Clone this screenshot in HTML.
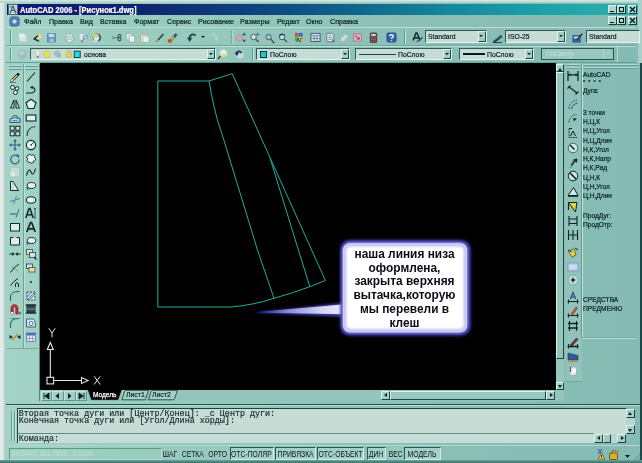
<!DOCTYPE html>
<html><head><meta charset="utf-8">
<style>
*{margin:0;padding:0;box-sizing:border-box}
html,body{width:642px;height:463px;overflow:hidden;background:#8dc0b7;font-family:"Liberation Sans",sans-serif;}
#root{position:relative;width:642px;height:463px;overflow:hidden;background:linear-gradient(90deg,#a4d3c5 0%,#9ccebf 15%,#96cabb 30%,#8ec2b7 55%,#88bdb5 80%,#86bbb4 100%)}
#blur{position:absolute;left:0;top:0;width:642px;height:463px;filter:blur(0.4px)}
.abs{position:absolute}
.t{position:absolute;white-space:nowrap;color:#062224;font-size:8px;line-height:10px;transform:scaleX(.89);transform-origin:0 0;-webkit-text-stroke:.22px currentColor}
.dd{position:absolute;background:#c8dcd6;border:1px solid #2c5a58;border-right-color:#e4f4ee;border-bottom-color:#e4f4ee;height:12.6px}
.dt{transform:scaleX(.85)}
.ddb{position:absolute;right:0;top:0;width:8px;height:10.6px;background:#a2cec4;border-left:1px solid #e4f4ee;border-top:1px solid #e4f4ee;border-right:1px solid #1c4644;border-bottom:1px solid #1c4644}
.ddb:after{content:"";position:absolute;left:0.8px;top:3px;border:2.2px solid transparent;border-top:2.8px solid #0a2020}
.sep{position:absolute;width:1px;background:#5e9a94;box-shadow:1px 0 0 #c4e4dc}
.wb{position:absolute;width:9px;height:9px;background:#acd8cc;border:1px solid #d8f0ea;border-right-color:#123c3c;border-bottom-color:#123c3c}
.sb{position:absolute;background:#a4d0c6;border:1px solid #dcf2ec;border-right-color:#1c4644;border-bottom-color:#1c4644}
.st{position:absolute;top:447px;height:12.5px;font-size:8.5px;line-height:12px;color:#041c1e;white-space:nowrap;text-align:center;overflow:visible;background:#98c8be}
.st span{display:inline-block;transform:scaleX(.8);transform-origin:50% 50%;white-space:nowrap;margin:0 -6px}
.st.on{border:1px solid #2a5654;border-right-color:#d4eee6;border-bottom-color:#d4eee6;background:#a4d0c6}
.mono{font-family:"Liberation Mono",monospace;font-size:8.4px;line-height:9px;color:#142c30;position:absolute;white-space:nowrap;-webkit-text-stroke:.18px #142c30}
svg{position:absolute;overflow:visible}
</style></head><body>
<div id="root"><div id="blur">

<div class="abs" style="left:0;top:0;width:5.5px;height:463px;background:linear-gradient(90deg,#e4ecea 0,#dfe8e6 50%,#98c6be 100%)"></div>
<div class="abs" style="left:0;top:0;width:642px;height:3px;background:linear-gradient(180deg,#d8ece6,#a4ccc4)"></div>
<div class="abs" style="left:638px;top:0;width:4px;height:63px;background:#a8d0c8"></div>
<div class="abs" style="left:640px;top:63px;width:2px;height:400px;background:#1c4848"></div>
<div class="abs" style="left:0;top:460px;width:642px;height:3px;background:linear-gradient(180deg,#6aa49c,#3c706c)"></div>
<div class="abs" style="left:7px;top:3.5px;width:631px;height:11.5px;background:linear-gradient(90deg,#101870 0%,#0e2470 20%,#0e4480 40%,#10648c 55%,#14889c 70%,#1ca2a8 85%,#30b0b0 100%)"></div>
<svg style="left:8px;top:4px" width="10" height="11"><rect x="0.5" y="0.5" width="9" height="10" fill="#c0d8d8" stroke="#48687c" stroke-width=".8"/><path d="M2 9.5L5 2L8 9.5M3 6.5H7" stroke="#2c6478" stroke-width="1.1" fill="none"/><path d="M1.5 3H4M6.5 8H8.5" stroke="#a04838" stroke-width=".9"/></svg>
<div class="t" style="left:20px;top:4.5px;color:#fff;font-weight:bold;font-size:8.4px;transform:scaleX(.9)">AutoCAD 2006 - [Рисунок1.dwg]</div>
<div class="wb" style="left:608px;top:5px"><i class="abs" style="left:1px;top:5px;width:3.5px;height:1.4px;background:#031818"></i></div>
<div class="wb" style="left:617px;top:5px"><i class="abs" style="left:1px;top:0.5px;width:5px;height:5.5px;border:1px solid #031818;border-top-width:1.6px"></i></div>
<div class="wb" style="left:628px;top:5px"><svg style="left:1px;top:1px" width="5" height="5"><path d="M0 0L5 5M5 0L0 5" stroke="#031818" stroke-width="1.3"/></svg></div>
<div class="wb" style="left:608px;top:16px"><i class="abs" style="left:1px;top:5px;width:3.5px;height:1.4px;background:#031818"></i></div>
<div class="wb" style="left:617px;top:16px"><i class="abs" style="left:1px;top:0.5px;width:5px;height:5.5px;border:1px solid #031818;border-top-width:1.6px"></i></div>
<div class="wb" style="left:628px;top:16px"><svg style="left:1px;top:1px" width="5" height="5"><path d="M0 0L5 5M5 0L0 5" stroke="#031818" stroke-width="1.3"/></svg></div>
<svg style="left:9px;top:16px" width="11" height="11"><rect x="0.8" y="0.8" width="9.4" height="9.4" rx="2.5" fill="#4c80b0" stroke="#3c6890" stroke-width=".8"/><path d="M3 5.5H8M5.5 3V8M3.8 3.8L7.2 7.2M7.2 3.8L3.8 7.2" stroke="#d0e4f0" stroke-width=".9"/></svg>
<div class="t" style="left:24px;top:16.5px">Файл</div>
<div class="t" style="left:49px;top:16.5px">Правка</div>
<div class="t" style="left:80px;top:16.5px">Вид</div>
<div class="t" style="left:100px;top:16.5px">Вставка</div>
<div class="t" style="left:134px;top:16.5px">Формат</div>
<div class="t" style="left:167px;top:16.5px">Сервис</div>
<div class="t" style="left:198px;top:16.5px">Рисование</div>
<div class="t" style="left:240px;top:16.5px">Размеры</div>
<div class="t" style="left:277px;top:16.5px">Редакт</div>
<div class="t" style="left:306px;top:16.5px">Окно</div>
<div class="t" style="left:330px;top:16.5px">Справка</div>
<div class="abs" style="left:6px;top:27px;width:630px;height:1px;background:#bcded6"></div>
<div class="abs" style="left:6px;top:45px;width:630px;height:1px;background:#6ea8a0"></div>
<div class="abs" style="left:6px;top:46px;width:630px;height:1px;background:#bcded6"></div>
<div class="abs" style="left:6px;top:62px;width:630px;height:1px;background:#64a098"></div>
<div class="sep" style="left:10px;top:30px;height:14px"></div>
<div class="sep" style="left:10px;top:48px;height:13px"></div>
<svg style="left:16.5px;top:32.0px;opacity:0.88" width="11" height="11" viewBox="0 0 12 12"><path d="M2 1.5H8L10.5 4V10.5H2Z" fill="#dcece8" stroke="#a8c8c2" stroke-width=".7"/><path d="M2.5 2H7.5L6 6H2.5Z" fill="#f0f8f6"/></svg>
<svg style="left:32.0px;top:31.5px;opacity:0.88" width="11" height="11" viewBox="0 0 12 12"><path d="M3 3L10 1.5L11 6.5L5 9Z" fill="#e8e0a0" stroke="#b8b070" stroke-width=".5"/><path d="M6.5 4L2.5 7.5L7.5 10" stroke="#101c48" stroke-width="1.8" fill="none"/></svg>
<svg style="left:45.5px;top:31.5px;opacity:0.88" width="11" height="11" viewBox="0 0 12 12"><rect x="1.5" y="1.5" width="9" height="9.5" fill="#6890c0" stroke="#4870a8" stroke-width=".7"/><rect x="3" y="2" width="6" height="3.5" fill="#c8dcec"/><rect x="4" y="7.5" width="4.5" height="3.5" fill="#a8c0d8"/></svg>
<svg style="left:63.5px;top:32.0px;opacity:0.88" width="11" height="11" viewBox="0 0 12 12"><rect x="1.5" y="5" width="9" height="4.5" rx="1.5" fill="#d0dce0" stroke="#7890a0" stroke-width=".6"/><circle cx="4.5" cy="3.5" r="2" fill="#e8eef0" stroke="#8098a8" stroke-width=".6"/><circle cx="7.5" cy="4" r="1.8" fill="#f0f4f4" stroke="#8098a8" stroke-width=".5"/><rect x="3.5" y="8" width="5" height="2.8" fill="#f4f8f8" stroke="#90a8b0" stroke-width=".5"/></svg>
<svg style="left:77.5px;top:31.5px;opacity:0.88" width="11" height="11" viewBox="0 0 12 12"><path d="M1.5 1.5H8L10 3.5V9.5H1.5Z" fill="#e0eceC" stroke="#a0bcc0" stroke-width=".6"/><circle cx="8" cy="5.5" r="2.3" fill="#b8d0f0" stroke="#5878b0" stroke-width=".8"/><path d="M6.3 7.3L3.5 11" stroke="#a84848" stroke-width="1.1"/></svg>
<svg style="left:91.0px;top:31.5px;opacity:0.88" width="11" height="11" viewBox="0 0 12 12"><circle cx="6.5" cy="6" r="4.3" fill="#e8f0f0" stroke="#304868" stroke-width=".8"/><ellipse cx="5" cy="4" rx="3" ry="2.2" fill="#e8d060"/><path d="M8 3C10.5 4.5 10.5 8 8 9.5" stroke="#203c68" stroke-width="1.5" fill="none"/><path d="M2.5 9H7V11H2.5Z" fill="#d8e0e4"/></svg>
<svg style="left:110.5px;top:31.5px;opacity:0.88" width="11" height="11" viewBox="0 0 12 12"><path d="M1 5L8 7M1 7.5L8 5.5" stroke="#507880" stroke-width=".9"/><circle cx="9.3" cy="4.3" r="1.6" fill="none" stroke="#1c3c48" stroke-width="1.1"/><circle cx="9.3" cy="8" r="1.6" fill="none" stroke="#1c3c48" stroke-width="1.1"/></svg>
<svg style="left:124.5px;top:31.5px;opacity:0.88" width="11" height="11" viewBox="0 0 12 12"><path d="M1.5 1.5H6L7.5 3V8.5H1.5Z" fill="#eef4f4" stroke="#809ca0" stroke-width=".7"/><path d="M4.5 4H9L10.5 5.5V11H4.5Z" fill="#f6fafa" stroke="#809ca0" stroke-width=".7"/></svg>
<svg style="left:138.5px;top:31.5px;opacity:0.88" width="11" height="11" viewBox="0 0 12 12"><rect x="1.5" y="2.5" width="8" height="8.5" rx="1" fill="#e4dcc8" stroke="#c09060" stroke-width=".7"/><rect x="4" y="1.2" width="3" height="2.2" fill="#b0b8c0"/><path d="M4.5 5H10.5V11H4.5Z" fill="#f4f8f8" stroke="#a0b8c0" stroke-width=".5"/></svg>
<svg style="left:153.5px;top:31.5px;opacity:0.88" width="11" height="11" viewBox="0 0 12 12"><path d="M2 10.5L4 8.5L9.5 2L10.5 3L5 9Z" fill="#283848" stroke="#182830" stroke-width=".6"/><path d="M2 10.5L3.5 8L5 9.5Z" fill="#c8a060"/></svg>
<svg style="left:167.0px;top:31.5px;opacity:0.88" width="11" height="11" viewBox="0 0 12 12"><path d="M2 10L7 4L9 6L4 11Z" fill="#d8a838" stroke="#705010" stroke-width=".6"/><path d="M7 4L9.5 1.5L11 3L9 6Z" fill="#304890" stroke="#182850" stroke-width=".6"/><rect x="1" y="8" width="4" height="3.5" fill="#c83828"/></svg>
<svg style="left:185.5px;top:31.5px;opacity:0.88" width="11" height="11" viewBox="0 0 12 12"><path d="M10.5 4C8 1.5 4 2.5 3.8 7" stroke="#14284c" stroke-width="1.9" fill="none"/><path d="M1 6L4 11L6.8 6.3Z" fill="#14284c"/></svg>
<div class="abs" style="left:201px;top:36px;border:2px solid transparent;border-top:2.5px solid #0a2020"></div>
<svg style="left:208.5px;top:31.5px;opacity:0.88" width="11" height="11" viewBox="0 0 12 12"><path d="M1.5 4C4 1.5 8 2.5 8.2 7" stroke="#b4d4cc" stroke-width="1.9" fill="none"/><path d="M11 6L8 11L5.2 6.3Z" fill="#b4d4cc"/></svg>
<div class="abs" style="left:224px;top:36px;border:2px solid transparent;border-top:2.5px solid #b0d0c8"></div>
<div class="sep" style="left:231px;top:30px;height:14px;opacity:.6"></div>
<svg style="left:234.5px;top:31.5px;opacity:0.88" width="11" height="11" viewBox="0 0 12 12"><path d="M1.5 7C0.5 4.5 2.5 2.5 4.5 3C6.5 2 8.5 3.5 8 6C8.5 9 6.5 10.5 4.5 10C2.8 10 1.5 9 1.5 7Z" fill="#d8a0b0" stroke="#b08090" stroke-width=".5"/><path d="M10 0.5L8 3.5H12ZM10 11.5L8 8.5H12Z" fill="#1c4858"/></svg>
<svg style="left:248.5px;top:31.5px;opacity:0.88" width="11" height="11" viewBox="0 0 12 12"><circle cx="5" cy="5.5" r="3" fill="#d4e8ec" stroke="#34505c" stroke-width="1"/><path d="M7.3 7.8L10.5 11" stroke="#4c3828" stroke-width="1.5"/><path d="M9.5 1V4M8 2.5H11" stroke="#204898" stroke-width=".9"/></svg>
<svg style="left:263.5px;top:31.5px;opacity:0.88" width="11" height="11" viewBox="0 0 12 12"><circle cx="5" cy="5.5" r="3" fill="#d4e8ec" stroke="#34505c" stroke-width="1"/><path d="M7.3 7.8L10 10.5" stroke="#4c3828" stroke-width="1.5"/><rect x="3.5" y="4" width="3" height="3" fill="none" stroke="#486898" stroke-width=".6"/><path d="M9 11H12L10.5 12.6Z" fill="#0a2020"/></svg>
<svg style="left:277.0px;top:31.5px;opacity:0.88" width="11" height="11" viewBox="0 0 12 12"><circle cx="5.5" cy="5.5" r="3" fill="#c4dce4" stroke="#34505c" stroke-width="1"/><path d="M7.8 7.8L10.8 11" stroke="#4c3828" stroke-width="1.5"/><path d="M2.5 4.5C4 2 7 2 8.5 4" stroke="#1c3468" stroke-width="1.6" fill="none"/></svg>
<svg style="left:293.5px;top:31.5px;opacity:0.88" width="11" height="11" viewBox="0 0 12 12"><rect x="1" y="1" width="4" height="4" fill="#d84038"/><rect x="5.5" y="1" width="4" height="4" fill="#3858c0"/><rect x="1" y="5.5" width="4" height="4" fill="#48a848"/><rect x="5.5" y="5.5" width="4" height="4" fill="#e8d040"/><path d="M3 11L4.5 7L6 11M7 11V7H9.5" stroke="#102028" stroke-width=".8" fill="none"/></svg>
<svg style="left:309.5px;top:31.5px;opacity:0.88" width="11" height="11" viewBox="0 0 12 12"><rect x="1" y="1.5" width="10" height="9" fill="#e4eef4" stroke="#283c60" stroke-width=".9"/><path d="M1 4H11M4.5 4V10.5M7.5 4V10.5M1 7H11" stroke="#385080" stroke-width=".7"/></svg>
<svg style="left:324.5px;top:31.5px;opacity:0.88" width="11" height="11" viewBox="0 0 12 12"><path d="M2 1.5H7.5L9.5 3.5V10.5H2Z" fill="#f0f6f6" stroke="#385068" stroke-width=".8"/><path d="M3.5 4H7M3.5 6H8M3.5 8H8" stroke="#486880" stroke-width=".7"/><path d="M8 8L11 10L8 11.5Z" fill="#306898"/></svg>
<svg style="left:338.5px;top:31.5px;opacity:0.88" width="11" height="11" viewBox="0 0 12 12"><path d="M1 8L7 2L11 5L5 11Z" fill="#c8d8d8" stroke="#90aca8" stroke-width=".7"/><path d="M2 9.5L8 3.5" stroke="#e8f0f0" stroke-width="1.2"/></svg>
<svg style="left:352.0px;top:31.5px;opacity:0.88" width="11" height="11" viewBox="0 0 12 12"><rect x="1.5" y="2" width="9" height="8" fill="#e8b0c0" stroke="#b06078" stroke-width=".8"/><path d="M3.5 4L8 8M8 8V5.5M8 8H5.5" stroke="#c02848" stroke-width="1.1" fill="none"/></svg>
<svg style="left:367.5px;top:31.5px;opacity:0.88" width="11" height="11" viewBox="0 0 12 12"><rect x="2.5" y="1" width="7" height="10.5" rx=".8" fill="#582830" stroke="#281018" stroke-width=".7"/><rect x="3.5" y="2" width="5" height="2.5" fill="#c8d8c0"/><path d="M3.5 6.5H8.5M3.5 8.3H8.5M3.5 10H8.5" stroke="#d86858" stroke-width="1" stroke-dasharray="1.2 .7"/></svg>
<svg style="left:385.5px;top:31.5px;opacity:0.88" width="11" height="11" viewBox="0 0 12 12"><rect x="1" y="1" width="10" height="10" rx="1.5" fill="#2454a8" stroke="#143070" stroke-width=".8"/><path d="M4 4.5C4 2.5 8 2.5 8 4.5C8 6 6 6 6 7.5M6 9V10" stroke="#fff" stroke-width="1.5" fill="none"/></svg>
<div class="sep" style="left:404px;top:30px;height:14px"></div>
<svg style="left:410.5px;top:30.5px;opacity:1" width="12" height="12" viewBox="0 0 12 12"><path d="M2 9.5L5 2H6L9 9.5M3.2 7H7.8" stroke="#0c2028" stroke-width="1.4" fill="none"/><path d="M5.5 10.5C8 10 10 8.5 11.5 6" stroke="#284860" stroke-width="1.2" fill="none"/></svg>
<svg style="left:492.0px;top:31.5px;opacity:0.88" width="11" height="11" viewBox="0 0 12 12"><path d="M1 10.5L10 3.5L11 5.5L3 11.5Z" fill="#283848" stroke="#101c28" stroke-width=".5"/><path d="M1 11.5H11" stroke="#182830" stroke-width="1"/><path d="M3 8L9 3" stroke="#7898b0" stroke-width=".8"/></svg>
<svg style="left:571.5px;top:31.5px;opacity:0.88" width="11" height="11" viewBox="0 0 12 12"><rect x="1" y="4" width="8" height="7" fill="#3058b0" stroke="#182c68" stroke-width=".7"/><rect x="2" y="5" width="6" height="2" fill="#d8e8f4"/><path d="M5 8L10.5 1.5L11.5 2.5L6 9Z" fill="#283038" stroke="#0c1418" stroke-width=".5"/></svg>
<div class="dd" style="left:425px;top:30.3px;width:61.5px;height:12.6px"><div class="t dt" style="left:2px;top:1.1px;color:#062224">Standard</div><div class="ddb"></div></div>
<div class="dd" style="left:505px;top:30.3px;width:61px;height:12.6px"><div class="t dt" style="left:2px;top:1.1px;color:#062224">ISO-25</div><div class="ddb"></div></div>
<div class="dd" style="left:586px;top:30.3px;width:53.5px"><div class="t dt" style="left:2px;top:1.1px">Standard</div></div>
<svg style="left:15.5px;top:48.3px;opacity:1" width="12" height="12" viewBox="0 0 12 12"><circle cx="6" cy="6" r="4.3" fill="#a4bcc4" stroke="#94b4b8" stroke-width=".6"/><ellipse cx="5.5" cy="4.8" rx="3" ry="1.8" fill="#bccfd4"/></svg>
<div class="dd" style="left:30px;top:47.5px;width:186px;height:12.6px"><svg style="left:3px;top:0px" width="50" height="11" viewBox="0 0 50 11"><path d="M3.8 0.8C1.6 0.8 1.6 4.5 2.9 6V7.5H4.7V6C6 4.5 6 0.8 3.8 0.8Z" fill="#f6f2dc" stroke="#a8a890" stroke-width=".4"/><path d="M2.9 7.3H4.7L3.8 9.3Z" fill="#403858"/><circle cx="13" cy="5.3" r="3.4" fill="#e8dc58" stroke="#c0b448" stroke-width=".5"/><circle cx="23" cy="4.6" r="2.9" fill="#a8c0c0" stroke="#94b0b0" stroke-width=".5"/><circle cx="25" cy="6.5" r="2.3" fill="#9cb8b8"/><rect x="32" y="3.3" width="5.5" height="5" rx="1.2" fill="#e4d458" stroke="#b8a840" stroke-width=".5"/><path d="M33 3.3C33 .8 36.5 .8 36.5 3.3" stroke="#c0b048" stroke-width=".9" fill="none"/><rect x="40.2" y="2.2" width="6" height="6.3" fill="#1ce0e0" stroke="#083838" stroke-width=".9"/></svg><div class="t dt" style="left:53px;top:1.1px;color:#062224">основа</div><div class="ddb"></div></div>
<svg style="left:217.0px;top:48.0px;opacity:1" width="12" height="12" viewBox="0 0 12 12"><circle cx="6.5" cy="5" r="3.6" fill="#e4eeec" stroke="#b8d0cc" stroke-width=".6"/><path d="M3.5 7.5C5 9.5 9 9.5 10.5 7L9 6H5Z" fill="#e8d870"/><path d="M3.5 8L1 11" stroke="#283848" stroke-width="1.3"/></svg>
<svg style="left:232.5px;top:48.0px;opacity:1" width="12" height="12" viewBox="0 0 12 12"><circle cx="6.5" cy="6.5" r="4.6" fill="#b4ccd0" stroke="#a0c0c0" stroke-width=".5"/><ellipse cx="7.5" cy="8" rx="3" ry="2.4" fill="#c8dcdc"/><path d="M8.5 5C7 2.5 4 3 3.5 5.5" stroke="#182c58" stroke-width="1.6" fill="none"/><path d="M1.5 4.5L3.8 8L6 4.8Z" fill="#182c58"/></svg>
<div class="sep" style="left:252px;top:48px;height:13px"></div>
<div class="dd" style="left:256px;top:47.5px;width:94px;height:12.6px"><i class="abs" style="left:3px;top:2px;width:7px;height:7px;background:#20c8c8;border:1px solid #083838"></i><div class="t dt" style="left:13px;top:1.1px;color:#062224">ПоСлою</div><div class="ddb"></div></div>
<div class="dd" style="left:355px;top:47.5px;width:97px;height:12.6px"><i class="abs" style="left:2.5px;top:5px;width:37px;height:1px;background:#203c3c"></i><div class="t dt" style="left:42px;top:1.1px;color:#062224">ПоСлою</div><div class="ddb"></div></div>
<div class="dd" style="left:459px;top:47.5px;width:75px;height:12.6px"><i class="abs" style="left:2.5px;top:4.5px;width:22px;height:2px;background:#081c1c"></i><div class="t dt" style="left:27px;top:1.1px;color:#062224">ПоСлою</div><div class="ddb"></div></div>
<div class="dd" style="left:540.5px;top:47.5px;width:73px;height:12.6px;background:#98c8be;border:1.5px solid #2a5452"><div class="t dt" style="left:4px;top:0.6px;color:#b8dcd6">ПоЦвету</div><i class="abs" style="right:2.5px;top:3px;border:2.2px solid transparent;border-top:2.8px solid #b4d6ce"></i><i class="abs" style="right:9px;top:0;width:1px;height:10px;background:#b4d8d0"></i></div>
<div class="abs" style="left:617px;top:47px;width:1px;height:15px;background:#b8dcd4"></div>
<div class="abs" style="left:40px;top:63px;width:515.5px;height:327px;background:#000"></div>
<div class="abs" style="left:9px;top:65px;width:13px;height:1px;background:#b4d8d0;box-shadow:0 3px 0 #b4d8d0,0 1px 0 #64a098,0 4px 0 #64a098"></div>
<div class="abs" style="left:25px;top:65px;width:13px;height:1px;background:#b4d8d0;box-shadow:0 3px 0 #b4d8d0,0 1px 0 #64a098,0 4px 0 #64a098"></div>
<div class="sep" style="left:23px;top:64px;height:284px;opacity:.8"></div>
<div class="abs" style="left:7px;top:347.5px;width:32px;height:1px;background:#74aca4"></div><div class="abs" style="left:7px;top:348.5px;width:32px;height:1px;background:#a4d0c6"></div>
<svg style="left:0;top:0" width="642" height="463" viewBox="0 0 642 463">
<defs>
<filter id="gl" x="-20%" y="-20%" width="140%" height="140%"><feGaussianBlur stdDeviation="1.8"/></filter><filter id="gl2" x="-20%" y="-20%" width="140%" height="140%"><feGaussianBlur stdDeviation="1.1"/></filter><filter id="gl3" x="-5%" y="-20%" width="110%" height="140%"><feGaussianBlur stdDeviation=".5"/></filter>
<linearGradient id="ptr" x1="0" x2="1" y1="0" y2="0"><stop offset="0" stop-color="#1a1a70" stop-opacity="0"/><stop offset=".12" stop-color="#2a2a94"/><stop offset=".4" stop-color="#8c8cd8"/><stop offset=".75" stop-color="#d4d4f6"/><stop offset="1" stop-color="#ececff"/></linearGradient><linearGradient id="ptr2" x1="0" x2="1" y1="0" y2="0"><stop offset="0" stop-color="#1a1a70" stop-opacity="0"/><stop offset=".15" stop-color="#2a2a94"/><stop offset="1" stop-color="#4848b8"/></linearGradient>
</defs>
<g fill="none" stroke="#22ac9e" stroke-width="1">
<path d="M209 81H157.8V307H231Q254 305 274 298.3Q293 293 309.8 286.7L325.4 280.5L232.2 73.7L209 81"/>
<path d="M209 81Q212 100 217.4 120L222 134L257.5 250L274 298.3"/>
<path d="M270 158L309.8 286.7"/>
</g>
<!-- UCS icon -->
<g fill="none" stroke="#e4e4e4" stroke-width="1.1">
<rect x="47" y="377.3" width="6.6" height="6.6"/>
<path d="M50.3 377.3V349.5M47.3 349.5H53.3L50.3 342.5Z"/>
<path d="M53.6 380.5H81.5M81.5 377.6V383.4L88 380.5Z"/>
<path d="M48.8 328.3L52 333L55.2 328.3M52 333V337.3" stroke-width="1"/>
<path d="M94.2 376.3L100.2 384.5M100.2 376.3L94.2 384.5" stroke-width="1"/>
</g>
<!-- callout -->
<path d="M249 312.8L345 302.5V317Z" fill="url(#ptr2)" filter="url(#gl2)" opacity=".9"/>
<path d="M251 312.4L345 304.3V314.3Z" fill="url(#ptr)" filter="url(#gl3)"/>
<rect x="340.5" y="240" width="130" height="95.5" rx="9" fill="#3c3cb4" filter="url(#gl)"/>
<rect x="341.5" y="241.5" width="127.5" height="92.5" rx="8.5" fill="#4a4abc" filter="url(#gl2)"/>
<rect x="343" y="243.3" width="124" height="89" rx="7" fill="#fff"/>
<rect x="344.5" y="244.8" width="121" height="86" rx="6" fill="none" stroke="#c0c0f2" stroke-width="3.5" filter="url(#gl2)"/>
</svg>
<div class="abs" style="left:344px;top:246.6px;width:121px;text-align:center;font-weight:bold;font-size:11.9px;line-height:14px;color:#0c0c18;white-space:nowrap">наша линия низа</div>
<div class="abs" style="left:344px;top:260.5px;width:121px;text-align:center;font-weight:bold;font-size:11.9px;line-height:14px;color:#0c0c18;white-space:nowrap">оформлена,</div>
<div class="abs" style="left:344px;top:274.4px;width:121px;text-align:center;font-weight:bold;font-size:11.9px;line-height:14px;color:#0c0c18;white-space:nowrap">закрыта верхняя</div>
<div class="abs" style="left:344px;top:288.3px;width:121px;text-align:center;font-weight:bold;font-size:11.9px;line-height:14px;color:#0c0c18;white-space:nowrap">вытачка,которую</div>
<div class="abs" style="left:344px;top:302.2px;width:121px;text-align:center;font-weight:bold;font-size:11.9px;line-height:14px;color:#0c0c18;white-space:nowrap">мы перевели в</div>
<div class="abs" style="left:344px;top:316.1px;width:121px;text-align:center;font-weight:bold;font-size:11.9px;line-height:14px;color:#0c0c18;white-space:nowrap">клеш</div>
<svg style="left:8.7px;top:70.6px;opacity:1" width="12" height="12" viewBox="0 0 12 12"><path d="M1.5 10.5L3 8L9 2L10.5 3.5L4.5 9.5Z" fill="#d8c070" stroke="#28241c" stroke-width="1"/><path d="M7.5 3.5L9 2L10.5 3.5L9 5Z" fill="#282420"/><path d="M1.5 10.5L3 8L4.5 9.5Z" fill="#f0e8d8"/><path d="M1 11.5H7" stroke="#486868" stroke-width=".8"/></svg>
<svg style="left:25.2px;top:70.6px;opacity:1" width="12" height="12" viewBox="0 0 12 12"><path d="M2 10.5L10 1.5" stroke="#10282c" stroke-width="1.1"/></svg>
<svg style="left:8.7px;top:84.3px;opacity:1" width="12" height="12" viewBox="0 0 12 12"><circle cx="3.5" cy="3.5" r="2" fill="#e8f4f0" stroke="#10282c" stroke-width="1"/><circle cx="8" cy="4.5" r="1.8" fill="#e8f4f0" stroke="#10282c" stroke-width="1"/><circle cx="6.5" cy="8.5" r="2" fill="#e8f4f0" stroke="#10282c" stroke-width="1"/></svg>
<svg style="left:25.2px;top:84.3px;opacity:1" width="12" height="12" viewBox="0 0 12 12"><path d="M1 9H6C11 9 11 3 7 3.5" stroke="#10282c" stroke-width="1.1" fill="none"/><path d="M7.5 1.5L5 3.8L8 5Z" fill="#10282c"/></svg>
<svg style="left:8.7px;top:98.0px;opacity:1" width="12" height="12" viewBox="0 0 12 12"><path d="M5 2L1.5 10H5Z" fill="#c8dcd8" stroke="#10282c" stroke-width="1"/><path d="M7 2L10.5 10H7Z" fill="#c8dcd8" stroke="#10282c" stroke-width="1"/></svg>
<svg style="left:25.2px;top:98.0px;opacity:1" width="12" height="12" viewBox="0 0 12 12"><path d="M6 1.2L11 4.8L9 10.5H3L1 4.8Z" fill="#e0f0ec" stroke="#10282c" stroke-width="1.1"/></svg>
<svg style="left:8.7px;top:111.6px;opacity:1" width="12" height="12" viewBox="0 0 12 12"><path d="M1 10.5H11V8C11 6.3 9.3 5.8 8.4 6.3C8.2 2.5 3.8 2.5 3.6 6.3C2 5.8 1 7 1 8.5Z" fill="#b8d8d8" stroke="#2c6484" stroke-width="1.1"/><path d="M3.3 8.7H8.7M4.8 6.5C5 5 7 5 7.2 6.5" stroke="#2c6484" stroke-width=".8" fill="none"/></svg>
<svg style="left:25.2px;top:111.6px;opacity:1" width="12" height="12" viewBox="0 0 12 12"><rect x="1.2" y="3" width="9.6" height="6" fill="#e0f0ec" stroke="#10282c" stroke-width="1.1"/></svg>
<svg style="left:8.7px;top:125.30000000000001px;opacity:1" width="12" height="12" viewBox="0 0 12 12"><rect x="1.2" y="1.2" width="4" height="4" fill="#d8ece8" stroke="#10282c"/><rect x="6.8" y="1.2" width="4" height="4" fill="#d8ece8" stroke="#10282c"/><rect x="1.2" y="6.8" width="4" height="4" fill="#d8ece8" stroke="#10282c"/><rect x="6.8" y="6.8" width="4" height="4" fill="#d8ece8" stroke="#10282c"/></svg>
<svg style="left:25.2px;top:125.30000000000001px;opacity:1" width="12" height="12" viewBox="0 0 12 12"><path d="M2 11C2 5 5 2 10.5 1.5" stroke="#204858" stroke-width="1.2" fill="none"/></svg>
<svg style="left:8.7px;top:139.0px;opacity:1" width="12" height="12" viewBox="0 0 12 12"><path d="M6 1.5V10.5M1.5 6H10.5" stroke="#2c6890" stroke-width="1.2"/><path d="M6 0L4 2.5H8ZM6 12L4 9.5H8ZM0 6L2.5 4V8ZM12 6L9.5 4V8Z" fill="#2c6890"/></svg>
<svg style="left:25.2px;top:139.0px;opacity:1" width="12" height="12" viewBox="0 0 12 12"><circle cx="6" cy="6" r="4.6" fill="#e4f2ee" stroke="#10282c" stroke-width="1.1"/><path d="M6 6L9 3" stroke="#285878" stroke-width="1"/><circle cx="6" cy="6" r=".8" fill="#10282c"/></svg>
<svg style="left:8.7px;top:152.7px;opacity:1" width="12" height="12" viewBox="0 0 12 12"><path d="M9.5 4A4.3 4.3 0 1 0 10.3 6.5" fill="none" stroke="#386c88" stroke-width="1.3"/><path d="M7 1L10.5 2L9.5 5.5Z" fill="#386c88"/></svg>
<svg style="left:25.2px;top:152.7px;opacity:1" width="12" height="12" viewBox="0 0 12 12"><path d="M3 3C3 1 6 1 6.5 2.5C8 1 10.5 2.5 9.5 4.5C11.5 5.5 10.5 8.5 8.5 8C8.5 10.5 5.5 11 5 9C2.5 10 1 7.5 3 6C1 5 1.5 2.5 3 3Z" fill="#e8f4f0" stroke="#10282c" stroke-width="1"/></svg>
<svg style="left:8.7px;top:166.4px;opacity:1" width="12" height="12" viewBox="0 0 12 12"><rect x="1.5" y="1.5" width="9" height="9" fill="#c4dcd6" stroke="#a8c8c0" stroke-width=".8"/><rect x="1.5" y="5.5" width="5" height="5" fill="#dcece8" stroke="#b4d0c8" stroke-width=".6"/></svg>
<svg style="left:25.2px;top:166.4px;opacity:1" width="12" height="12" viewBox="0 0 12 12"><path d="M1.5 9.5C3 3 5 3 6 6C7 9 9 9 10.5 2.5" stroke="#10282c" stroke-width="1.1" fill="none"/></svg>
<svg style="left:8.7px;top:180.0px;opacity:1" width="12" height="12" viewBox="0 0 12 12"><path d="M1.5 1.5H4L9.5 10.5H1.5Z" fill="#e0eeea" stroke="#10282c" stroke-width="1"/><path d="M4 2V10" stroke="#a0b8b4" stroke-width=".8"/></svg>
<svg style="left:25.2px;top:180.0px;opacity:1" width="12" height="12" viewBox="0 0 12 12"><ellipse cx="6.5" cy="5.5" rx="4.2" ry="3" fill="#e4f2ee" stroke="#10282c" stroke-width="1"/><path d="M1 7L4.5 7.5L2.5 10.5Z" fill="#2868a0"/></svg>
<svg style="left:8.7px;top:193.7px;opacity:1" width="12" height="12" viewBox="0 0 12 12"><path d="M1 7.5L5 6.3M7 5.7L11 4.5" stroke="#3880a0" stroke-width="1"/><path d="M7.5 2L4.5 10.5" stroke="#3880a0" stroke-width=".9"/></svg>
<svg style="left:25.2px;top:193.7px;opacity:1" width="12" height="12" viewBox="0 0 12 12"><ellipse cx="6" cy="6" rx="4.8" ry="3.2" fill="#e4f2ee" stroke="#10282c" stroke-width="1.1"/></svg>
<svg style="left:8.7px;top:207.4px;opacity:1" width="12" height="12" viewBox="0 0 12 12"><path d="M1 7H7.5" stroke="#2c6c90" stroke-width="1.1"/><path d="M10 2.5L7 10.5" stroke="#2c6c90" stroke-width="1"/></svg>
<svg style="left:25.2px;top:207.4px;opacity:1" width="12" height="12" viewBox="0 0 12 12"><path d="M0.8 11L4 1.5H5L8.2 11M2.2 7.8H6.8" stroke="#10282c" stroke-width="1.5" fill="none"/><path d="M10 1.5V11M9 1.5H11M9 11H11" stroke="#10282c" stroke-width=".7"/></svg>
<svg style="left:8.7px;top:221.1px;opacity:1" width="12" height="12" viewBox="0 0 12 12"><rect x="1.5" y="2.5" width="9" height="7.5" fill="#dcece8" stroke="#10282c" stroke-width="1"/></svg>
<svg style="left:25.2px;top:221.1px;opacity:1" width="12" height="12" viewBox="0 0 12 12"><path d="M1.8 11L5.4 1.5H6.6L10.2 11M3.4 7.8H8.6" stroke="#10282c" stroke-width="1.7" fill="none"/></svg>
<svg style="left:8.7px;top:234.8px;opacity:1" width="12" height="12" viewBox="0 0 12 12"><path d="M1.5 2.5H4.5M7.5 2.5H10.5V10H1.5V2.5" fill="#dcece8" stroke="#10282c" stroke-width="1"/></svg>
<svg style="left:25.2px;top:234.8px;opacity:1" width="12" height="12" viewBox="0 0 12 12"><ellipse cx="6.5" cy="5.5" rx="4.2" ry="3" fill="#e4f2ee" stroke="#10282c" stroke-width="1"/><path d="M1 7L4.5 7.5L2.5 10.5Z" fill="#2868a0"/></svg>
<svg style="left:8.7px;top:248.4px;opacity:1" width="12" height="12" viewBox="0 0 12 12"><path d="M0.5 6H4M8 6H11.5" stroke="#10282c" stroke-width="1.1"/><path d="M5.8 6L3.3 4V8ZM6.2 6L8.7 4V8Z" fill="#10282c"/></svg>
<svg style="left:25.2px;top:248.4px;opacity:1" width="12" height="12" viewBox="0 0 12 12"><rect x="1.5" y="1.5" width="6" height="5" fill="#e8e4b0" stroke="#385058" stroke-width=".8"/><rect x="4.5" y="4.5" width="6" height="5" fill="#d0e4f0" stroke="#284058" stroke-width=".8"/><path d="M9 9L11.5 11.5" stroke="#10282c" stroke-width="1.2"/></svg>
<svg style="left:8.7px;top:262.1px;opacity:1" width="12" height="12" viewBox="0 0 12 12"><path d="M1.5 10.5L5.5 5.5L10 2" stroke="#10282c" stroke-width="1" fill="none"/><path d="M3 5L9 9" stroke="#38707c" stroke-width=".8" stroke-dasharray="1.5 1"/></svg>
<svg style="left:25.2px;top:262.1px;opacity:1" width="12" height="12" viewBox="0 0 12 12"><rect x="1.5" y="2" width="6" height="4.5" fill="#d0e4f0" stroke="#284058" stroke-width=".8"/><rect x="4" y="5.5" width="6" height="4.5" fill="#e8e0a0" stroke="#485838" stroke-width=".8"/></svg>
<svg style="left:8.7px;top:275.8px;opacity:1" width="12" height="12" viewBox="0 0 12 12"><path d="M1.5 9.5L5 5.5L9 2.5" stroke="#10282c" stroke-width="1" fill="none"/><path d="M6.5 11V8C6.5 6.5 9.5 6.5 9.5 8V11" stroke="#10282c" stroke-width="1" fill="none"/></svg>
<svg style="left:25.2px;top:275.8px;opacity:1" width="12" height="12" viewBox="0 0 12 12"><circle cx="6" cy="6" r="1" fill="#10282c"/></svg>
<svg style="left:8.7px;top:289.5px;opacity:1" width="12" height="12" viewBox="0 0 12 12"><path d="M1.5 11V7C1.5 3.5 4 1.5 10.5 1.5" stroke="#285860" stroke-width="1" fill="none"/><path d="M3.5 11V7.5C3.5 5 5.5 3.5 10.5 3.5" stroke="#a8c8c0" stroke-width=".8" fill="none"/></svg>
<svg style="left:25.2px;top:289.5px;opacity:1" width="12" height="12" viewBox="0 0 12 12"><rect x="2" y="2" width="8" height="8" fill="#c4dce4" stroke="#284860" stroke-width=".9" stroke-dasharray="2 1"/><path d="M2 7L7 2M4 10L10 4M2 10L10 2" stroke="#385c78" stroke-width=".7"/></svg>
<svg style="left:8.7px;top:303.2px;opacity:1" width="12" height="12" viewBox="0 0 12 12"><path d="M2 11V5C2 0.5 9 0.5 9 5V11H6.8V5C6.8 3.3 4.2 3.3 4.2 5V11Z" fill="#c83038" stroke="#701018" stroke-width=".6"/><rect x="2" y="9" width="2.2" height="2" fill="#e8e8e8"/><circle cx="10.8" cy="10.2" r="1" fill="none" stroke="#10282c" stroke-width=".6"/></svg>
<svg style="left:25.2px;top:303.2px;opacity:1" width="12" height="12" viewBox="0 0 12 12"><rect x="2" y="2" width="8" height="8" fill="#30444c" stroke="#182830" stroke-width="1"/><path d="M0.5 2H11.5M0.5 10H11.5" stroke="#182830" stroke-width="1.2"/><path d="M2 6H10" stroke="#8098a0" stroke-width="1"/></svg>
<svg style="left:8.7px;top:316.8px;opacity:1" width="12" height="12" viewBox="0 0 12 12"><path d="M1.5 11V7C1.5 3.5 4 1.5 10.5 1.5" stroke="#1c7c84" stroke-width="1.2" fill="none"/><path d="M1.5 1.5H10.5" stroke="#486c70" stroke-width=".7"/></svg>
<svg style="left:25.2px;top:316.8px;opacity:1" width="12" height="12" viewBox="0 0 12 12"><path d="M1.5 2H7C10 2 10.5 5 10.5 10H1.5Z" fill="#d4e8f0" stroke="#305870" stroke-width=".9"/><circle cx="6" cy="6.5" r="2" fill="#f0f8f8" stroke="#305870" stroke-width=".8"/></svg>
<svg style="left:8.7px;top:330.5px;opacity:1" width="12" height="12" viewBox="0 0 12 12"><path d="M0.5 4L4 6L0.5 8ZM11.5 4L8 6L11.5 8Z" fill="#10282c"/><path d="M3 9L9 3" stroke="#c08828" stroke-width="1.6"/></svg>
<svg style="left:25.2px;top:330.5px;opacity:1" width="12" height="12" viewBox="0 0 12 12"><rect x="1.5" y="2" width="9" height="8.5" fill="#dce8f4" stroke="#5878a8" stroke-width=".8"/><rect x="1.5" y="2" width="9" height="2.5" fill="#4870b8"/><path d="M4.5 4.5V10.5M7.5 4.5V10.5M1.5 7.5H10.5" stroke="#7890b8" stroke-width=".7"/></svg>
<div class="abs" style="left:38px;top:64px;width:1px;height:337px;background:#a6d0c7"></div>
<div class="abs" style="left:39px;top:64px;width:1px;height:337px;background:#4c8884"></div>
<div class="abs" style="left:555.5px;top:63px;width:8.5px;height:327px;background:#96c7bd"></div>
<div class="sb" style="left:555.5px;top:64px;width:8.5px;height:8px"><i class="abs" style="left:1px;top:0.5px;border:2.5px solid transparent;border-bottom:3px solid #0a2020"></i></div>
<div class="sb" style="left:555.5px;top:72px;width:8.5px;height:287px;background:#94c5bb"></div>
<div class="sb" style="left:555.5px;top:381.5px;width:8.5px;height:8.5px"><i class="abs" style="left:1px;top:2.5px;border:2.5px solid transparent;border-top:3px solid #0a2020"></i></div>
<div class="abs" style="left:40px;top:390px;width:524px;height:10.5px;background:#94c5bb"></div>
<div class="abs" style="left:381px;top:391px;width:174px;height:9px;background:#9ccac0"></div>
<div class="sb" style="left:381px;top:391px;width:9px;height:9px"><i class="abs" style="left:-0.5px;top:1px;border:2.5px solid transparent;border-right:3px solid #0a2020"></i></div>
<div class="sb" style="left:390px;top:391px;width:155.5px;height:9px;background:#98c8be"></div>
<div class="sb" style="left:546px;top:391px;width:9px;height:9px"><i class="abs" style="left:2.5px;top:1px;border:2.5px solid transparent;border-left:3px solid #0a2020"></i></div>
<div class="abs" style="left:40px;top:390px;width:48px;height:10.5px;background:#9ccac0"></div>
<div class="sb" style="left:40.5px;top:390.5px;width:11.7px;height:10px;background:#a2cfc5;border-color:#c4e4dc #5c9890 #5c9890 #c4e4dc"></div>
<svg style="left:42.7px;top:391.5px" width="7" height="8" viewBox="0 0 7 8"><path d="M1 1V7M6 1L2 4L6 7Z" fill="#0a2020" stroke="#0a2020" stroke-width="1"/></svg>
<div class="sb" style="left:52.2px;top:390.5px;width:11.7px;height:10px;background:#a2cfc5;border-color:#c4e4dc #5c9890 #5c9890 #c4e4dc"></div>
<svg style="left:54.400000000000006px;top:391.5px" width="7" height="8" viewBox="0 0 7 8"><path d="M5 1L1.5 4L5 7Z" fill="#0a2020"/></svg>
<div class="sb" style="left:63.9px;top:390.5px;width:11.7px;height:10px;background:#a2cfc5;border-color:#c4e4dc #5c9890 #5c9890 #c4e4dc"></div>
<svg style="left:66.1px;top:391.5px" width="7" height="8" viewBox="0 0 7 8"><path d="M2 1L5.5 4L2 7Z" fill="#0a2020"/></svg>
<div class="sb" style="left:75.6px;top:390.5px;width:11.7px;height:10px;background:#a2cfc5;border-color:#c4e4dc #5c9890 #5c9890 #c4e4dc"></div>
<svg style="left:77.8px;top:391.5px" width="7" height="8" viewBox="0 0 7 8"><path d="M6 1V7M1 1L5 4L1 7Z" fill="#0a2020" stroke="#0a2020" stroke-width="1"/></svg>
<svg style="left:86px;top:390px" width="100" height="12" viewBox="0 0 100 12"><path d="M62.5 9.8L65 1.5Q65.4 0.3 66.6 0.3H91.5L88.5 8.8Q88.1 9.8 87 9.8Z" fill="#a4d0c6" stroke="#123838" stroke-width=".8"/><path d="M36 9.8L38.6 1.5Q39 0.3 40.2 0.3H62.5L59.7 8.8Q59.3 9.8 58.2 9.8Z" fill="#a4d0c6" stroke="#123838" stroke-width=".8"/><path d="M1.5 0L5 10.3H32.5L36 0" fill="#000" stroke="#9cc8c0" stroke-width=".8"/></svg>
<div class="t" style="left:92.7px;top:390.3px;font-size:7.8px;color:#fff;-webkit-text-stroke:.25px #fff;transform:scaleX(.84)">Модель</div>
<div class="t" style="left:125.6px;top:390px;font-size:7.8px;-webkit-text-stroke:.2px #062224;transform:scaleX(.88)">Лист1</div>
<div class="t" style="left:152.2px;top:390px;font-size:7.8px;-webkit-text-stroke:.2px #062224;transform:scaleX(.88)">Лист2</div>
<div class="abs" style="left:6px;top:403.5px;width:634px;height:1.5px;background:#24504e"></div>
<div class="abs" style="left:6px;top:405px;width:634px;height:1px;background:#b8dcd4"></div>
<div class="sep" style="left:11px;top:411px;height:30px"></div>
<div class="sep" style="left:13.5px;top:411px;height:30px"></div>
<div class="abs" style="left:17px;top:408px;width:609px;height:35px;background:#c8dcd6;border-top:1.5px solid #1c4444;border-left:1.5px solid #1c4444"></div>
<div class="mono" style="left:18.8px;top:409.5px">Вторая точка дуги или [Центр/Конец]: _c Центр дуги:</div>
<div class="mono" style="left:18.8px;top:417.4px">Конечная точка дуги или [Угол/Длина хорды]:</div>
<div class="abs" style="left:18px;top:433px;width:576px;height:1px;background:#5c8c88"></div>
<div class="mono" style="left:18.8px;top:434.7px">Команда:</div>
<div class="abs" style="left:626px;top:409px;width:9px;height:24px;background:#b4d8d0"></div>
<div class="sb" style="left:626px;top:409px;width:9px;height:8.5px"><i class="abs" style="left:1px;top:0px;border:2.5px solid transparent;border-bottom:3px solid #0a2020"></i></div>
<div class="sb" style="left:626px;top:425px;width:9px;height:8.5px"><i class="abs" style="left:1px;top:2.5px;border:2.5px solid transparent;border-top:3px solid #0a2020"></i></div>
<div class="abs" style="left:594px;top:434px;width:41px;height:9px;background:#88bdb5"></div>
<div class="abs" style="left:594px;top:434px;width:32px;height:9px;background:#b4d8d0"></div>
<div class="sb" style="left:594px;top:434px;width:9px;height:9px"><i class="abs" style="left:-0.5px;top:1px;border:2.5px solid transparent;border-right:3px solid #0a2020"></i></div>
<div class="sb" style="left:603px;top:434px;width:8px;height:9px;background:#9ccac0"></div>
<div class="sb" style="left:617px;top:434px;width:9px;height:9px"><i class="abs" style="left:2.5px;top:1px;border:2.5px solid transparent;border-left:3px solid #0a2020"></i></div>
<div class="abs" style="left:6px;top:444.5px;width:634px;height:1px;background:#b4d8d0"></div>
<div class="abs" style="left:9px;top:448px;width:153px;height:11.5px;border:1px solid #5c9690;border-right-color:#b8dcd4;border-bottom-color:#b8dcd4"></div>
<div class="t" style="left:11.5px;top:449px;font-size:7.6px;color:#c0e0d8;-webkit-text-stroke:0;transform:scaleX(.87)">69.6447, 361.7536 , 0.0000</div>
<div class="st" style="left:162.5px;width:14.5px;padding-top:1px;"><span>ШАГ</span></div>
<div class="st" style="left:181px;width:24px;padding-top:1px;"><span>СЕТКА</span></div>
<div class="st" style="left:207.5px;width:21px;padding-top:1px;"><span>ОРТО</span></div>
<div class="st on" style="left:229.7px;width:44px;"><span>ОТС-ПОЛЯР</span></div>
<div class="st on" style="left:275px;width:40.6px;"><span>ПРИВЯЗКА</span></div>
<div class="st on" style="left:317px;width:47px;"><span>ОТС-ОБЪЕКТ</span></div>
<div class="st on" style="left:366.8px;width:19px;"><span>ДИН</span></div>
<div class="st" style="left:388px;width:15px;padding-top:1px;"><span>ВЕС</span></div>
<div class="st on" style="left:403.9px;width:37px;"><span>МОДЕЛЬ</span></div>
<svg style="left:594px;top:447px" width="46" height="14" viewBox="0 0 46 14"><path d="M4 2L8 7M8 2L4 7" stroke="#4858a8" stroke-width="1.1"/><path d="M7.5 6L11 12H4Z" fill="#e8d040" stroke="#504818" stroke-width=".6"/><path d="M7.5 8V10.5" stroke="#181808" stroke-width=".9"/><rect x="15.5" y="6" width="8" height="6.5" rx="1" fill="#d8b030" stroke="#604808" stroke-width=".8"/><path d="M17.5 6C17.5 2.5 22 2.5 22 5" stroke="#705818" stroke-width="1" fill="none"/><circle cx="24" cy="4" r="1.2" fill="#e07030"/><path d="M31 8H36L33.5 11Z" fill="#0a2020"/><path d="M40 13L46 7M42.5 13L46 9.5M45 13L46 12" stroke="#5c9890" stroke-width="1"/></svg>
<div class="abs" style="left:564.5px;top:63px;width:17px;height:318px;background:rgba(255,255,255,.09)"></div>
<div class="abs" style="left:566px;top:64px;width:14px;height:1px;background:#b4d8d0;box-shadow:0 3px 0 #b4d8d0,0 1px 0 #64a098,0 4px 0 #64a098"></div>
<div class="abs" style="left:584px;top:64px;width:54px;height:1px;background:#b4d8d0;box-shadow:0 3px 0 #b4d8d0,0 1px 0 #64a098,0 4px 0 #64a098"></div>
<div class="sep" style="left:581px;top:64px;height:274px"></div>
<div class="abs" style="left:565px;top:381px;width:17px;height:1px;background:#6ea8a0"></div>
<div class="abs" style="left:582px;top:337px;width:54px;height:1px;background:#6ea8a0"></div>
<div class="abs" style="left:582px;top:338px;width:54px;height:1px;background:#b8dcd4"></div>
<div class="t" style="left:583px;top:69.7px;font-size:7.6px;transform:scaleX(.87)">AutoCAD</div>
<div class="t" style="left:583px;top:76.5px;font-size:6px;letter-spacing:1px;transform:scaleX(.87)">* * * *</div>
<div class="t" style="left:583px;top:86.0px;font-size:7.6px;transform:scaleX(.87)">Дуга:</div>
<div class="t" style="left:583px;top:107.6px;font-size:7.6px;transform:scaleX(.87)">3 точки</div>
<div class="t" style="left:583px;top:116.9px;font-size:7.6px;transform:scaleX(.87)">Н,Ц,К</div>
<div class="t" style="left:583px;top:126.2px;font-size:7.6px;transform:scaleX(.87)">Н,Ц,Угол</div>
<div class="t" style="left:583px;top:135.5px;font-size:7.6px;transform:scaleX(.87)">Н,Ц,Длин</div>
<div class="t" style="left:583px;top:144.8px;font-size:7.6px;transform:scaleX(.87)">Н,К,Угол</div>
<div class="t" style="left:583px;top:154.1px;font-size:7.6px;transform:scaleX(.87)">Н,К,Напр</div>
<div class="t" style="left:583px;top:163.4px;font-size:7.6px;transform:scaleX(.87)">Н,К,Рад</div>
<div class="t" style="left:583px;top:172.7px;font-size:7.6px;transform:scaleX(.87)">Ц,Н,К</div>
<div class="t" style="left:583px;top:182.0px;font-size:7.6px;transform:scaleX(.87)">Ц,Н,Угол</div>
<div class="t" style="left:583px;top:191.3px;font-size:7.6px;transform:scaleX(.87)">Ц,Н,Длин</div>
<div class="t" style="left:583px;top:210.7px;font-size:7.6px;transform:scaleX(.87)">ПродДуг:</div>
<div class="t" style="left:583px;top:220.1px;font-size:7.6px;transform:scaleX(.87)">ПродОтр:</div>
<div class="t" style="left:583px;top:294.8px;font-size:7.6px;transform:scaleX(.87)">СРЕДСТВА</div>
<div class="t" style="left:583px;top:304.0px;font-size:7.6px;transform:scaleX(.87)">ПРЕДМЕНЮ</div>
<svg style="left:567.0px;top:69.5px;opacity:1" width="12" height="12" viewBox="0 0 12 12"><path d="M1 1V11M11 1V11M1 4.8H11" stroke="#0c2428" stroke-width="1.2"/><path d="M1 4.8L3.5 3.3V6.3ZM11 4.8L8.5 3.3V6.3Z" fill="#0c2428"/></svg>
<svg style="left:567.0px;top:84.3px;opacity:1" width="12" height="12" viewBox="0 0 12 12"><path d="M2 3L10 9" stroke="#0c2428" stroke-width="1.2"/><path d="M0.5 4.5L3.5 1.5M8.5 10.5L11.5 7.5" stroke="#0c2428" stroke-width="1.2"/></svg>
<svg style="left:567.0px;top:98.3px;opacity:1" width="12" height="12" viewBox="0 0 12 12"><path d="M2 11C2 6 5 3 10 2" stroke="#285860" stroke-width="1" fill="none" stroke-dasharray="2 1"/><path d="M4.5 11C5 8 7 6 10.5 5" stroke="#285860" stroke-width="1" fill="none"/></svg>
<svg style="left:567.0px;top:112.3px;opacity:1" width="12" height="12" viewBox="0 0 12 12"><path d="M2 10.5C2 6 5 3 10 2.5" stroke="#285860" stroke-width="1" fill="none" stroke-dasharray="2 1"/><path d="M10 6L7 9.5L6 6.5Z" fill="#0c2428"/></svg>
<svg style="left:567.0px;top:126.5px;opacity:1" width="12" height="12" viewBox="0 0 12 12"><path d="M2 2V10.5H10.5" stroke="#0c2428" stroke-width="1" stroke-dasharray="1.5 1" fill="none"/><path d="M3.5 9L6 4L8.5 9M2 1.5H5" stroke="#0c2428" stroke-width="1" fill="none"/></svg>
<svg style="left:567.0px;top:142.0px;opacity:1" width="12" height="12" viewBox="0 0 12 12"><circle cx="6" cy="6" r="4.8" fill="#cce6e0" stroke="#306068" stroke-width=".9"/><path d="M3 3L7.5 7.5" stroke="#0c2428" stroke-width="1.5"/></svg>
<svg style="left:567.0px;top:157.0px;opacity:1" width="12" height="12" viewBox="0 0 12 12"><path d="M3 11C6 9 7 6 6 3" stroke="#285860" stroke-width=".9" fill="none"/><path d="M4 8L10 2M10 2L6.5 3M10 2L9 5.5" stroke="#0c2428" stroke-width="1.2" fill="none"/></svg>
<svg style="left:567.0px;top:170.3px;opacity:1" width="12" height="12" viewBox="0 0 12 12"><circle cx="6" cy="6" r="4.8" fill="#cce6e0" stroke="#0c2428" stroke-width="1"/><path d="M2.5 2.5L9.5 9.5" stroke="#0c2428" stroke-width="1.6"/></svg>
<svg style="left:567.0px;top:184.6px;opacity:1" width="12" height="12" viewBox="0 0 12 12"><path d="M1 10.5H11L6.5 2.5Z" fill="#d0e8e2" stroke="#0c2428" stroke-width="1"/><path d="M1 11.5H11" stroke="#0c2428" stroke-width=".8"/></svg>
<svg style="left:567.0px;top:201.0px;opacity:1" width="12" height="12" viewBox="0 0 12 12"><path d="M1.5 1.5H10L8.5 11Z" fill="#e8d038" stroke="#0c2428" stroke-width="1"/><path d="M1.5 1.5L1.5 9" stroke="#0c2428" stroke-width="1.2"/></svg>
<svg style="left:567.0px;top:215.3px;opacity:1" width="12" height="12" viewBox="0 0 12 12"><path d="M2 1V11M10 1V11M2 4H10M2 8.5H10" stroke="#0c2428" stroke-width="1.1"/></svg>
<svg style="left:567.0px;top:228.7px;opacity:1" width="12" height="12" viewBox="0 0 12 12"><path d="M1.5 1V11M6 1V11M10.5 1V11M1.5 6H10.5" stroke="#0c2428" stroke-width="1.1"/></svg>
<svg style="left:567.0px;top:246.5px;opacity:1" width="12" height="12" viewBox="0 0 12 12"><path d="M1 4L7 2L9 8L5 10Z" fill="#e8d040" stroke="#404830" stroke-width=".7"/><path d="M1 3L5 5M8 1L11 3" stroke="#284868" stroke-width="1.1"/></svg>
<svg style="left:567.0px;top:261.0px;opacity:1" width="12" height="12" viewBox="0 0 12 12"><rect x="1" y="2" width="10" height="8" fill="#b8cce8" stroke="#7890c0" stroke-width=".7"/><path d="M3 4V8M5 4V8M7 4V8M9 4V8" stroke="#e8f0f8" stroke-width=".9"/></svg>
<svg style="left:567.0px;top:274.4px;opacity:1" width="12" height="12" viewBox="0 0 12 12"><circle cx="6" cy="6" r="4.8" fill="#c4e0da" stroke="#7ca8a0" stroke-width=".9"/><path d="M6 3.5V8.5M3.5 6H8.5" stroke="#0c2428" stroke-width="1.2"/><circle cx="6" cy="6" r="1.2" fill="#0c2428"/></svg>
<svg style="left:567.0px;top:292.3px;opacity:1" width="12" height="12" viewBox="0 0 12 12"><path d="M3.3 7L6 0.5L8.7 7M4.3 5H7.7" stroke="#284878" stroke-width="1.2" fill="none"/><path d="M0.5 9.5H11.5M1.5 7.5V11.5M10.5 7.5V11.5" stroke="#0c2428" stroke-width="1.1"/></svg>
<svg style="left:567.0px;top:306.4px;opacity:1" width="12" height="12" viewBox="0 0 12 12"><path d="M4 8L9 1L10.5 2L6 8.5Z" fill="#c85838" stroke="#602818" stroke-width=".5"/><path d="M0.5 9.5H11.5M1.5 7.5V11.5M10.5 7.5V11.5" stroke="#0c2428" stroke-width="1.1"/></svg>
<svg style="left:567.0px;top:319.8px;opacity:1" width="12" height="12" viewBox="0 0 12 12"><path d="M1 3.5H11M1 8H11" stroke="#0c2428" stroke-width="1.3"/><path d="M2.5 1V11M9.5 1V11" stroke="#0c2428" stroke-width="1.1"/></svg>
<svg style="left:567.0px;top:337.3px;opacity:1" width="12" height="12" viewBox="0 0 12 12"><path d="M3 8L9.5 1L11 2.5L5 9Z" fill="#7c3028" stroke="#281008" stroke-width=".5"/><path d="M0.5 9.5H11.5" stroke="#0c2428" stroke-width="1.6"/><path d="M1.5 7V11.5M10.5 7V11.5" stroke="#0c2428" stroke-width="1"/></svg>
<svg style="left:567.0px;top:350.7px;opacity:1" width="12" height="12" viewBox="0 0 12 12"><path d="M1 2L11 4.5V9H1Z" fill="#2c5c98" stroke="#183c68" stroke-width=".6"/><path d="M1 10.5H11" stroke="#d08828" stroke-width="1.4"/></svg>
<svg style="left:567.0px;top:364.8px;opacity:1" width="12" height="12" viewBox="0 0 12 12"><path d="M2 2H10L9 10.5H3Z" fill="#dce8ec" stroke="#88a8b0" stroke-width=".7"/><path d="M3.5 2V7" stroke="#385870" stroke-width="1"/><rect x="5" y="4" width="4" height="4" fill="#f4f8f8"/></svg>
</div></div></body></html>
